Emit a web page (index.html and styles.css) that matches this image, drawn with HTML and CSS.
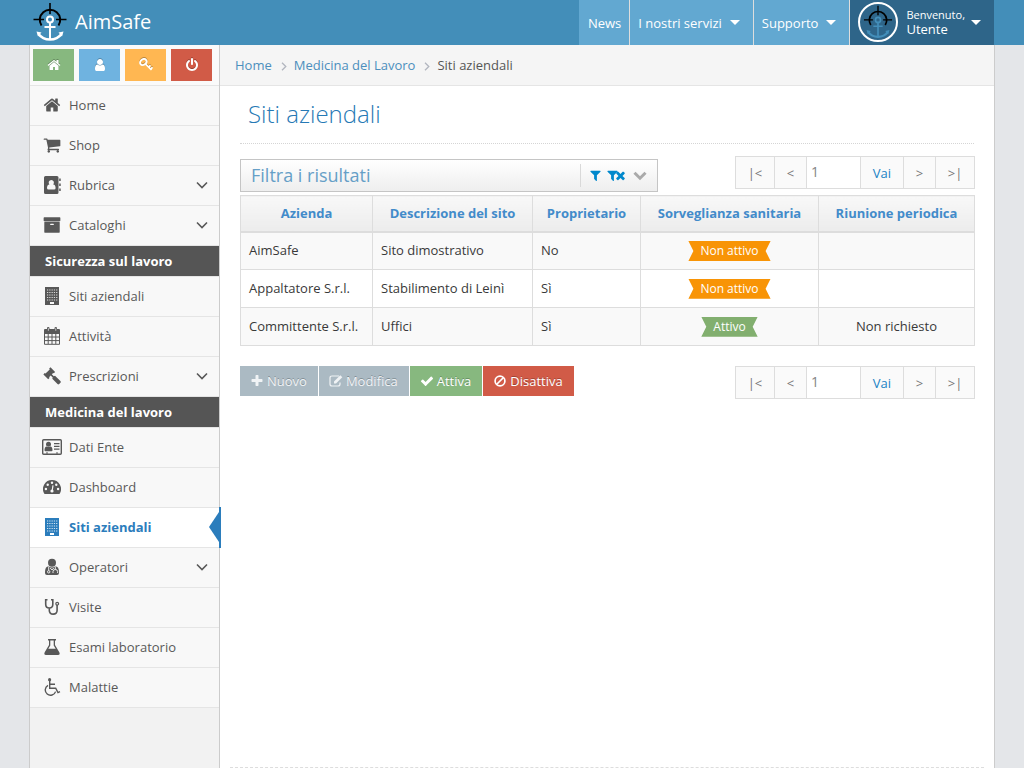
FILE: index.html
```html
<!DOCTYPE html>
<html lang="it">
<head>
<meta charset="utf-8">
<meta name="viewport" content="width=device-width, initial-scale=1">
<title>AimSafe - Siti aziendali</title>
<link rel="stylesheet" href="styles.css">
</head>
<body>
<svg class="sprite" aria-hidden="true">
  <symbol id="home" viewBox="0 0 1792 1792"><path d="M1472 992v480q0 26-19 45t-45 19h-384v-384h-256v384h-384q-26 0-45-19t-19-45v-480q0-1 .5-3t.5-3l575-474 575 474q1 2 1 6zm223-69l-62 74q-8 9-21 11h-3q-13 0-21-7l-692-577-692 577q-12 8-24 7-13-2-21-11l-62-74q-8-10-7-23.5t11-21.5l719-599q32-26 76-26t76 26l244 204v-195q0-14 9-23t23-9h192q14 0 23 9t9 23v408l219 182q10 8 11 21.5t-7 23.5z"/></symbol>
  <symbol id="user" viewBox="0 0 1792 1792"><path d="M1536 1399q0 109-62.500 187t-150.500 78h-854q-88 0-150.500-78t-62.500-187q0-85 8.500-160.500t31.500-152 58.500-131 94-89 134.500-34.500q131 128 313 128t313-128q76 0 134.500 34.500t94 89 58.500 131 31.500 152 8.500 160.500zm-256-887q0 159-112.500 271.500t-271.500 112.500-271.500-112.500-112.500-271.500 112.500-271.500 271.500-112.500 271.500 112.500 112.500 271.500z"/></symbol>
  <symbol id="cart" viewBox="0 0 1792 1792"><path d="M704 1536q0 52-38 90t-90 38-90-38-38-90 38-90 90-38 90 38 38 90zm896 0q0 52-38 90t-90 38-90-38-38-90 38-90 90-38 90 38 38 90zm128-1088v512q0 24-16.500 42.500t-40.500 21.500l-1044 122q13 60 13 70 0 16-24 64h920q26 0 45 19t19 45-19 45-45 19h-1024q-26 0-45-19t-19-45q0-11 8-31.500t16-36 21.500-40 15.500-29.500l-177-823h-204q-26 0-45-19t-19-45 19-45 45-19h256q16 0 28.500 6.500t19.500 15.500 13 24.500 8 26 5.500 29.500 4.500 26h1201q26 0 45 19t19 45z"/></symbol>
  <symbol id="power" viewBox="0 0 1792 1792"><path d="M1664 896q0 156-61 298t-164 245-245 164-298 61-298-61-245-164-164-245-61-298q0-182 80.500-343t226.500-270q43-32 95.500-25t83.500 50q32 42 24.500 94.500t-49.500 84.500q-98 74-151.500 181t-53.500 228q0 104 40.500 198.500t109.500 163.500 163.500 109.500 198.500 40.500 198.500-40.500 163.500-109.500 109.500-163.500 40.500-198.500q0-121-53.500-228t-151.500-181q-42-32-49.500-84.500t24.500-94.500q31-43 84-50t95 25q146 109 226.500 270t80.500 343zm-640-768v640q0 52-38 90t-90 38-90-38-38-90v-640q0-52 38-90t90-38 90 38 38 90z"/></symbol>
  <symbol id="archive" viewBox="0 0 1792 1792"><path d="M1088 832q0-26-19-45t-45-19h-256q-26 0-45 19t-19 45 19 45 45 19h256q26 0 45-19t19-45zm576-192v960q0 26-19 45t-45 19h-1408q-26 0-45-19t-19-45v-960q0-26 19-45t45-19h1408q26 0 45 19t19 45zm64-448v256q0 26-19 45t-45 19h-1536q-26 0-45-19t-19-45v-256q0-26 19-45t45-19h1536q26 0 45 19t19 45z"/></symbol>
  <symbol id="check" viewBox="0 0 1792 1792"><path d="M1671 566q0 40-28 68l-724 724-136 136q-28 28-68 28t-68-28l-136-136-362-362q-28-28-28-68t28-68l136-136q28-28 68-28t68 28l294 295 656-657q28-28 68-28t68 28l136 136q28 28 28 68z"/></symbol>
  <symbol id="plus" viewBox="0 0 1792 1792"><path d="M1600 736v192q0 40-28 68t-68 28h-416v416q0 40-28 68t-68 28h-192q-40 0-68-28t-28-68v-416h-416q-40 0-68-28t-28-68v-192q0-40 28-68t68-28h416v-416q0-40 28-68t68-28h192q40 0 68 28t28 68v416h416q40 0 68 28t28 68z"/></symbol>
  <symbol id="filter" viewBox="0 0 1792 1792"><path d="M1595 295q17 41-14 70l-493 493v742q0 42-39 59-13 5-25 5-27 0-45-19l-256-256q-19-19-19-45v-486l-493-493q-31-29-14-70 17-39 59-39h1280q42 0 59 39z"/></symbol>
  <symbol id="times" viewBox="0 0 1792 1792"><path d="M1490 1322q0 40-28 68l-136 136q-28 28-68 28t-68-28l-294-294-294 294q-28 28-68 28t-68-28l-136-136q-28-28-28-68t28-68l294-294-294-294q-28-28-28-68t28-68l136-136q28-28 68-28t68 28l294 294 294-294q28-28 68-28t68 28l136 136q28 28 28 68t-28 68l-294 294 294 294q28 28 28 68z"/></symbol>
  <symbol id="key" viewBox="0 0 14 14"><g fill="none" stroke="currentColor"><ellipse cx="4.300" cy="4" rx="3.400" ry="2.700" stroke-width="1.900" transform="rotate(-35 4.300 4)"/><path d="M6.500 6l6 6M9.600 9.200l1.900-1.900M11.600 11.200l1.900-1.900" stroke-width="1.700"/></g></symbol>
  <symbol id="book" viewBox="0 0 18 18"><path fill-rule="evenodd" d="M2.500 0h11.500q1.500 0 1.500 1.500v15q0 1.500-1.500 1.500H2.500Q1 18 1 16.500v-15Q1 0 2.500 0zM8.300 4a2.600 2.600 0 0 0-1.900 4.400Q4 8.800 4 12q0 1.500 1.500 1.500h5.600q1.500 0 1.500-1.500 0-3.200-2.400-3.600A2.600 2.600 0 0 0 8.300 4z"/><path d="M16.200 2.500h1.500v2.600h-1.500zM16.200 7.500h1.500v2.600h-1.500zM16.200 12.500h1.500v2.600h-1.500z"/></symbol>
  <symbol id="building" viewBox="0 0 18 18"><path fill-rule="evenodd" d="M2 0h14v18H2zM7 15v2h4v-2z"/><path d="M4 3h10.500M4 5.500h10.500M4 8h10.500M4 10.500h10.500M4 13h10.500" stroke="#fff" stroke-opacity=".8" stroke-width="1.200" stroke-dasharray="1.200 1.080"/></symbol>
  <symbol id="calendar" viewBox="0 0 18 18"><path fill="none" stroke="currentColor" d="M1.500 6.500h15v10.800h-15zM5.200 6v11M9 6v11M12.800 6v11M1 10h16M1 13.600h16"/><path fill-rule="evenodd" d="M1 3q0-1 1-1h2V1q0-1 1.200-1T6.500 1v1h5V1q0-1 1.300-1T14 1v1h2q1 0 1 1v4H1zM4.900 1.300v2.500h.7V1.300zM12.500 1.300v2.500h.7V1.300z"/></symbol>
  <symbol id="gavel" viewBox="0 0 18 18"><path d="M7.500.3l4.600 4.600-1.300 1.300-.6-.3-1.400 1.400 2 2 1.200-.6 5.400 5.400q.8.800 0 1.700l-1.200 1.200q-.9.800-1.700 0L9.300 11.800l.4-1.200-2-2-1.600 1.600.4.700-1.300 1.300L.4 7.400l1.300-1.300.8.500 4.200-4.200-.5-.8z"/></symbol>
  <symbol id="card" viewBox="0 0 20 16"><path fill="none" stroke="currentColor" stroke-width="1.400" d="M1.700.8h16.600q1 0 1 1v12.400q0 1-1 1H1.700q-1 0-1-1V1.800q0-1 1-1z"/><circle cx="6.500" cy="5.300" r="2.500"/><path d="M4.800 7.500q-2.300.3-2.300 3.700 0 1 1 1h6q1 0 1-1 0-3.400-2.300-3.700-1.700 1.200-3.400 0zM12 4h5.500v1.200H12zM12 6.800h5.500V8H12zM12 9.600h5.500v1.200H12zM4 13.500h2v1H4zM14 13.500h2v1h-2z"/></symbol>
  <symbol id="gauge" viewBox="0 0 18 18"><path d="M9 2a9 9 0 0 1 7.800 13.500q-.3.500-.9.500H2.100q-.6 0-.9-.5A9 9 0 0 1 9 2z"/><g fill="#f8f8f8"><circle cx="2.900" cy="11" r="1.200"/><circle cx="4.700" cy="6.700" r="1.200"/><circle cx="9" cy="4.800" r="1.200"/><circle cx="13.300" cy="6.700" r="1.200"/><circle cx="15.100" cy="11" r="1.200"/></g><path d="M10 7.300L9.300 12" stroke="#f8f8f8" stroke-width="1.200"/><circle cx="9" cy="13" r="1.600" fill="#f8f8f8"/></symbol>
  <symbol id="doctor" viewBox="0 0 18 18"><circle cx="9" cy="4.800" r="4"/><path d="M5.600 8.200Q9 11 12.400 8.200 16 8.500 16 14v1q0 2-2 2H4q-2 0-2-2v-1q0-5.500 3.600-5.800z"/><g fill="none" stroke="#f8f8f8" stroke-width=".9"><path d="M5.700 8.500v4M12.300 8.500v3M10 15v-1.500q0-2 2.300-2t2.300 2V15M7.200 10l1.800 2 1.800-2"/><circle cx="5.700" cy="13.800" r="1.200"/></g></symbol>
  <symbol id="stethoscope" viewBox="0 0 18 18"><path fill="none" stroke="currentColor" stroke-width="1.600" d="M4.500 1.800H2.700v4.500Q2.700 10 6.300 10T9.800 6.300V1.800H8M6.300 10v2.200q0 3.900 3.900 3.900t3.900-3.900V7"/><circle cx="14.200" cy="5.700" r="1.400" fill="none" stroke="currentColor" stroke-width="1.200"/></symbol>
  <symbol id="flask" viewBox="0 0 18 18"><path fill-rule="evenodd" d="M5 1h8v1.400h-1V7l4.300 7.300Q17.500 17 15 17H3Q.5 17 1.700 14.300L6 7V2.400H5zM7.300 2.400v5L5.300 10.800h7.400l-2-3.400v-5z"/></symbol>
  <symbol id="wheelchair" viewBox="0 0 18 18"><circle cx="6.600" cy="1.700" r="1.600"/><path fill="none" stroke="currentColor" stroke-width="1.400" d="M6.700 3v7.200h6l2.300 4.400 2-.9M7 6.200h5M5 7.300a5.300 5.300 0 1 0 7.600 6.300"/></symbol>
  <symbol id="edit" viewBox="0 0 14 14"><path fill="none" stroke="currentColor" stroke-width="1.200" d="M10 2H3Q1 2 1 4v6q0 2 2 2h6q2 0 2-2V8.500"/><path d="M5 7.500L11.300 1.200l2 2L7 9.500H5z"/></symbol>
  <symbol id="ban" viewBox="0 0 14 14"><g fill="none" stroke="currentColor" stroke-width="1.700"><circle cx="7" cy="7" r="4.900"/><path d="M3.500 10.500l7-7"/></g></symbol>
  <symbol id="down" viewBox="0 0 12 8"><path fill="none" stroke="currentColor" stroke-width="1.600" d="M1 1.500l5 5 5-5"/></symbol>
  <symbol id="chevron" viewBox="0 0 14 10"><path fill="none" stroke="currentColor" stroke-width="3" d="M1.500 1.700L7 7.200l5.500-5.500"/></symbol>
  <symbol id="right" viewBox="0 0 6 9"><path fill="none" stroke="currentColor" stroke-width="1.300" d="M1 .7l3.800 3.800L1 8.300"/></symbol>
  <symbol id="caret" viewBox="0 0 10 5"><path d="M0 0h10L5 5z"/></symbol>
  <symbol id="anchor" viewBox="0 0 34 40"><path fill="none" stroke="#000" stroke-width="2" d="M8.500 23.500a10.200 10.200 0 1 1 17 0"/><path fill="none" stroke="#000" stroke-width="1.600" d="M17 1v11M.5 17.500H11M23 17.500h10.500"/><g fill="none" stroke="currentColor" stroke-width="2"><circle cx="17" cy="17.500" r="3"/><path d="M17 21v16M11.500 25h11"/><path stroke-width="2.600" d="M5.500 32q4 5.500 11.500 5.500T28.500 32"/></g><path fill="currentColor" d="M3.500 29.500l5 1-3.500 4zM30.500 29.500l-5 1 3.500 4z"/></symbol>
</svg>

<header class="navbar">
  <a class="brand" href="#"><svg class="brand-logo"><use href="#anchor"/></svg>AimSafe</a>
  <nav class="topnav" aria-label="Principale">
    <a href="#">News</a>
    <a href="#">I nostri servizi <svg class="caret"><use href="#caret"/></svg></a>
    <a href="#">Supporto <svg class="caret"><use href="#caret"/></svg></a>
    <a class="account" href="#"><span class="avatar"><svg><use href="#anchor"/></svg></span><span class="account-name"><small>Benvenuto,</small>Utente</span><svg class="caret"><use href="#caret"/></svg></a>
  </nav>
</header>

<div class="container">
  <aside class="sidebar">
    <div class="shortcuts">
      <button class="green" type="button" aria-label="Home"><svg><use href="#home"/></svg></button>
      <button class="blue" type="button" aria-label="Profilo"><svg><use href="#user"/></svg></button>
      <button class="yellow" type="button" aria-label="Password"><svg><use href="#key"/></svg></button>
      <button class="red" type="button" aria-label="Esci"><svg><use href="#power"/></svg></button>
    </div>
    <nav aria-label="Menu">
      <ul class="menu">
        <li><a href="#"><svg class="icon"><use href="#home"/></svg>Home</a></li>
        <li><a href="#"><svg class="icon"><use href="#cart"/></svg>Shop</a></li>
        <li><a href="#"><svg class="icon"><use href="#book"/></svg>Rubrica<svg class="arrow"><use href="#down"/></svg></a></li>
        <li><a href="#"><svg class="icon"><use href="#archive"/></svg>Cataloghi<svg class="arrow"><use href="#down"/></svg></a></li>
        <li class="section">Sicurezza sul lavoro</li>
        <li><a href="#"><svg class="icon"><use href="#building"/></svg>Siti aziendali</a></li>
        <li><a href="#"><svg class="icon"><use href="#calendar"/></svg>Attività</a></li>
        <li><a href="#"><svg class="icon"><use href="#gavel"/></svg>Prescrizioni<svg class="arrow"><use href="#down"/></svg></a></li>
        <li class="section">Medicina del lavoro</li>
        <li><a href="#"><svg class="icon wide"><use href="#card"/></svg>Dati Ente</a></li>
        <li><a href="#"><svg class="icon"><use href="#gauge"/></svg>Dashboard</a></li>
        <li class="active"><a href="#" aria-current="page"><svg class="icon"><use href="#building"/></svg>Siti aziendali</a></li>
        <li><a href="#"><svg class="icon"><use href="#doctor"/></svg>Operatori<svg class="arrow"><use href="#down"/></svg></a></li>
        <li><a href="#"><svg class="icon"><use href="#stethoscope"/></svg>Visite</a></li>
        <li><a href="#"><svg class="icon"><use href="#flask"/></svg>Esami laboratorio</a></li>
        <li><a href="#"><svg class="icon"><use href="#wheelchair"/></svg>Malattie</a></li>
      </ul>
    </nav>
  </aside>

  <main class="main">
    <nav class="breadcrumb" aria-label="Percorso">
      <a href="#">Home</a><svg><use href="#right"/></svg><a href="#">Medicina del Lavoro</a><svg><use href="#right"/></svg><span>Siti aziendali</span>
    </nav>
    <div class="page">
      <h1>Siti aziendali</h1>
      <div class="toolbar">
        <section class="filter">
          <h2>Filtra i risultati</h2>
          <div class="filter-tools">
            <button type="button" aria-label="Filtra"><svg><use href="#filter"/></svg></button>
            <button type="button" aria-label="Rimuovi filtro"><svg><use href="#filter"/></svg><svg class="cross"><use href="#times"/></svg></button>
            <button class="toggle" type="button" aria-label="Espandi"><svg><use href="#chevron"/></svg></button>
          </div>
        </section>
        <div class="pager">
          <button type="button">|&lt;</button><button class="step" type="button">&lt;</button><input type="text" value="1" aria-label="Pagina"><button class="go" type="button">Vai</button><button class="step" type="button">&gt;</button><button type="button">&gt;|</button>
        </div>
      </div>
      <table>
        <colgroup><col class="c-company"><col class="c-site"><col class="c-owner"><col class="c-health"><col class="c-meeting"></colgroup>
        <thead><tr><th>Azienda</th><th>Descrizione del sito</th><th>Proprietario</th><th>Sorveglianza sanitaria</th><th>Riunione periodica</th></tr></thead>
        <tbody>
          <tr><td>AimSafe</td><td>Sito dimostrativo</td><td>No</td><td class="center"><span class="tag">Non attivo</span></td><td></td></tr>
          <tr><td>Appaltatore S.r.l.</td><td>Stabilimento di Leinì</td><td>Sì</td><td class="center"><span class="tag">Non attivo</span></td><td></td></tr>
          <tr><td>Committente S.r.l.</td><td>Uffici</td><td>Sì</td><td class="center"><span class="tag on">Attivo</span></td><td class="center">Non richiesto</td></tr>
        </tbody>
      </table>
      <div class="toolbar">
        <div class="actions">
          <button class="grey" type="button"><svg><use href="#plus"/></svg>Nuovo</button>
          <button class="grey" type="button"><svg><use href="#edit"/></svg>Modifica</button>
          <button class="green" type="button"><svg><use href="#check"/></svg>Attiva</button>
          <button class="red" type="button"><svg><use href="#ban"/></svg>Disattiva</button>
        </div>
        <div class="pager">
          <button type="button">|&lt;</button><button class="step" type="button">&lt;</button><input type="text" value="1" aria-label="Pagina"><button class="go" type="button">Vai</button><button class="step" type="button">&gt;</button><button type="button">&gt;|</button>
        </div>
      </div>
    </div>
    <footer class="footer"></footer>
  </main>
</div>
</body>
</html>
```
FILE: styles.css
```css
* { box-sizing: border-box; }
body {
  margin: 0;
  min-height: 100vh;
  display: flex;
  flex-direction: column;
  background: #e4e6e9;
  color: #393939;
  font: 13px/20px "Open Sans", sans-serif;
}
a { color: #4c8fbd; text-decoration: none; }
button, input { font: inherit; border: 0; padding: 0; margin: 0; border-radius: 0; }
button { cursor: pointer; }
svg { display: block; flex: none; fill: currentColor; }
.sprite { position: absolute; width: 0; height: 0; }

.navbar {
  display: flex;
  justify-content: space-between;
  height: 45px;
  padding: 0 30px;
  background: #438eb9;
}
.brand { display: flex; align-items: center; gap: 8px; padding: 0 0 2px 3px; color: #fff; font-size: 20px; }
.brand-logo { width: 34px; height: 40px; }
.topnav { display: flex; }
.topnav a {
  display: flex;
  align-items: center;
  gap: 8px;
  padding: 0 13px 0 8px;
  background: #62a8d1;
  border-left: 1px solid #ddd;
  color: #fff;
}
.topnav a:first-child { border-left: 0; padding: 0 8px 0 9px; }
.caret { width: 10px; height: 5px; }
.topnav .account { background: #2e6589; padding-bottom: 1px; }
.avatar {
  display: flex;
  align-items: center;
  justify-content: center;
  width: 40px;
  height: 40px;
  border: 2px solid #fff;
  border-radius: 50%;
  color: #438eb9;
}
.avatar svg { width: 30px; height: 34px; }
.account-name { display: flex; flex-direction: column; line-height: 15px; }
.account-name small { font-size: 11px; }
.account .caret { margin-left: -2px; }

.container { display: flex; flex: 1; margin: 0 29px; border: 1px solid #ccc; border-width: 0 1px; background: #fff; }
.sidebar { width: 190px; flex: none; background: #f2f2f2; border-right: 1px solid #ccc; }
.shortcuts { display: flex; gap: 5px; height: 41px; padding: 4px 3px; background: #fafafa; border-bottom: 1px solid #e5e5e5; }
.shortcuts button { display: grid; place-items: center; width: 41px; height: 32px; color: #fff; }
.shortcuts svg { width: 14px; height: 14px; filter: drop-shadow(0 -1px 0 rgba(0, 0, 0, .25)); }
.green { background: #87b87f; }
.blue { background: #6fb3e0; }
.yellow { background: #ffb752; }
.red { background: #d15b47; }
.grey { background: #abbac3; }

.menu { margin: 0; padding: 0; list-style: none; }
.menu li { position: relative; border-bottom: 1px solid #e5e5e5; }
.menu a { display: flex; align-items: center; height: 39px; padding: 0 11px 2px 13px; background: #f8f8f8; color: #585858; }
.icon { width: 18px; height: 18px; margin-right: 8px; }
.icon.wide { width: 20px; height: 16px; margin: 0 7px 0 -1px; }
.arrow { width: 12px; height: 8px; margin-left: auto; }
.menu .section { padding: 5px 15px; background: #555; background-clip: padding-box; color: #fff; font-weight: 700; }
.menu .active a { background: #fff; color: #2b7dbc; font-weight: 700; }
.active::before, .active::after { content: ""; position: absolute; background: #2b7dbc; }
.active::before { top: 4px; right: 0; width: 10px; height: 30px; clip-path: polygon(100% 0, 100% 100%, 0 50%); }
.active::after { top: -1px; bottom: -1px; right: -2px; width: 2px; }

.main { display: flex; flex-direction: column; flex: 1; min-width: 0; }
.breadcrumb { display: flex; align-items: center; height: 41px; padding: 0 15px; background: #f5f5f5; border-bottom: 1px solid #e5e5e5; color: #555; }
.breadcrumb svg { width: 6px; height: 9px; margin: 2px 7px 0 9px; color: #b2b6bf; }
.page { flex: 1; padding: 8px 20px 24px; }
h1 { margin: 0 0 12px; padding: 0 8px 9px; border-bottom: 1px dotted #d5d5d5; color: #2679b5; font-size: 24px; line-height: 40px; font-weight: 300; }
.toolbar { display: flex; justify-content: space-between; align-items: flex-start; }
.filter {
  display: flex;
  align-items: center;
  justify-content: space-between;
  width: 57%;
  height: 33px;
  margin: 3px 0;
  padding: 0 10px;
  border: 1px solid #c5c5c5;
  background: linear-gradient(#fff, #eee);
}
h2 { margin: 0; padding-bottom: 2px; color: #669fc7; font-size: 18px; line-height: 28px; font-weight: 400; }
.filter-tools { display: flex; align-items: center; gap: 4px; height: 23px; padding-left: 8px; border-left: 1px solid #d9d9d9; }
.filter-tools button { display: flex; align-items: center; background: none; color: #0088cc; }
.filter-tools svg { width: 13px; height: 13px; }
.filter-tools .cross { margin-left: -5px; }
.filter-tools .toggle { color: #aaa; margin-left: 2px; }
.filter-tools .toggle svg { width: 14px; height: 10px; }

.pager { display: flex; margin-right: -1px; border: 1px solid #ddd; }
.pager > * { width: 39px; height: 31px; background: #fafafa; color: #777; border-right: 1px solid #ddd; }
.pager > :last-child { width: 38px; border-right: 0; }
.pager .step { width: 32px; }
.pager input { width: 54px; padding: 0 4px 3px; background: #fff; color: #858585; font-size: 14px; }
.pager .go { width: 43px; color: #2283c5; }

table { width: 100%; table-layout: fixed; border-collapse: collapse; margin-bottom: 20px; }
.c-company { width: 132px; }
.c-site { width: 160px; }
.c-owner { width: 108px; }
.c-health { width: 178px; }
.c-meeting { width: 156px; }
th, td { padding: 0 8px; border: 1px solid #ddd; text-align: left; }
th { height: 36px; border-bottom-width: 2px; background: linear-gradient(#f8f8f8, #ececec); color: #428bca; text-align: center; font-weight: 700; white-space: nowrap; }
td { height: 38px; padding-bottom: 1px; }
tbody tr:nth-child(odd) { background: #f9f9f9; }
td.center { text-align: center; }
.tag {
  display: inline-block;
  padding: 0 12px;
  background: #f89406;
  color: #fff;
  font-size: 12px;
  line-height: 20px;
  vertical-align: middle;
  clip-path: polygon(0 0, 100% 0, calc(100% - 5px) 50%, 100% 100%, 0 100%, 5px 50%);
}
.tag.on { background: #82af6f; }

.actions { display: flex; gap: 1px; }
.actions button { display: flex; align-items: center; gap: 3px; height: 30px; padding: 0 11px 0 10px; color: #fff; text-shadow: 0 -1px 0 rgba(0, 0, 0, .25); }
.actions svg { width: 14px; height: 14px; }
.actions .grey { color: #f0f3f5; }
.footer { height: 1px; margin: 0 10px; border-top: 1px dashed #ddd; }
```
